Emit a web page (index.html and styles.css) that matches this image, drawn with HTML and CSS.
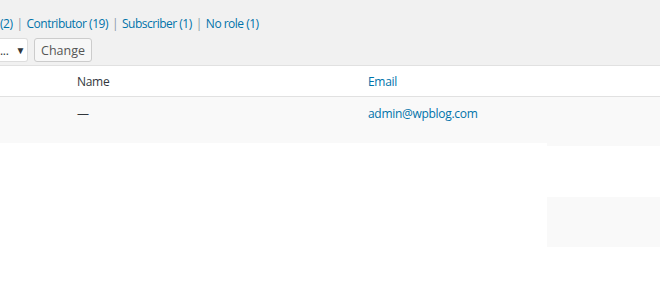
FILE: index.html
```html
<!DOCTYPE html>
<html lang="en">
<head>
  <meta charset="UTF-8">
  <title>Users</title>
  <link rel="stylesheet" href="styles.css">
</head>
<body>
  <div class="top">
    <ul class="subsubsub">
      <li><a href="#">(2)</a></li>
      <li class="sep">|</li>
      <li><a href="#">Contributor (19)</a></li>
      <li class="sep">|</li>
      <li><a href="#">Subscriber (1)</a></li>
      <li class="sep">|</li>
      <li><a href="#">No role (1)</a></li>
    </ul>
    <div class="tablenav">
      <div class="select"><span>...</span><span class="arrow">&#9660;</span></div>
      <button class="button">Change</button>
    </div>
  </div>

  <table class="users">
    <thead>
      <tr>
        <th class="col-cb"></th>
        <th class="col-name">Name</th>
        <th class="col-email"><a href="#">Email</a></th>
      </tr>
    </thead>
    <tbody>
      <tr>
        <td></td>
        <td>&mdash;</td>
        <td><a href="#">admin@wpblog.com</a></td>
      </tr>
    </tbody>
  </table>

  <div class="below">
    <div class="spacer"></div>
    <div class="side">
      <div class="side-strip"></div>
      <div class="side-block"></div>
    </div>
  </div>
</body>
</html>
```

FILE: styles.css
```css
body {
  margin: 0;
  font-family: "Open Sans", "Noto Sans", sans-serif;
  font-size: 12px;
  letter-spacing: -0.3px;
  color: #32373c;
  background: #fff;
}
a {
  color: #0073aa;
  text-decoration: none;
}
.top {
  background: #f1f1f1;
  height: 65px;
  border-bottom: 1px solid #e1e1e1;
}
.subsubsub {
  list-style: none;
  margin: 0;
  padding: 15px 0 0 0;
  display: flex;
  gap: 4px;
  height: 18px;
  line-height: 18px;
  letter-spacing: -0.5px;
}
.subsubsub .sep {
  color: #8a9aa8;
}
.tablenav {
  display: flex;
  gap: 6px;
  margin-top: 5px;
}
.select {
  width: 25px;
  height: 22px;
  background: #fff;
  border: 1px solid #ddd;
  border-left: none;
  border-radius: 0 3px 3px 0;
  display: flex;
  align-items: center;
  justify-content: space-between;
  padding-right: 2px;
  font-size: 12px;
  color: #32373c;
}
.select .arrow {
  font-size: 10px;
  color: #32373c;
}
.button {
  height: 24px;
  width: 58px;
  padding: 0;
  background: #f7f7f7;
  border: 1px solid #ccc;
  border-radius: 3px;
  font-family: inherit;
  font-size: 12.5px;
  letter-spacing: 0;
  color: #555;
}
.users {
  width: 100%;
  border-collapse: collapse;
}
.users th {
  text-align: left;
  font-weight: normal;
  height: 30px;
  padding: 0;
  border-bottom: 1px solid #e1e1e1;
}
.users td {
  height: 46px;
  padding: 0;
  vertical-align: top;
  padding-top: 8px;
  box-sizing: border-box;
  background: #f9f9f9;
}
.col-cb {
  width: 77px;
}
.col-name {
  width: 291px;
}
.below {
  display: flex;
}
.spacer {
  flex: 1;
}
.side {
  width: 113px;
}
.side-strip {
  height: 3px;
  background: #f9f9f9;
}
.side-block {
  margin-top: 51px;
  height: 50px;
  background: #f9f9f9;
}
```
